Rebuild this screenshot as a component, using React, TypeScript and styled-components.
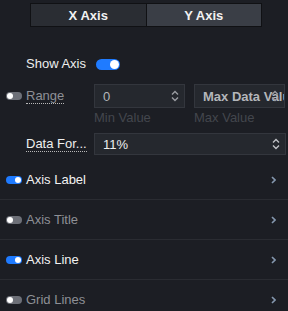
import React from 'react';
import styled, { createGlobalStyle } from 'styled-components';

const GlobalStyle = createGlobalStyle`
  body {
    margin: 0;
    background: #1c1e24;
    font-family: "Liberation Sans", Arial, sans-serif;
    font-size: 13px;
    color: #e8e8e8;
  }
`;

const Panel = styled.div`
  width: 288px;
  height: 311px;
  overflow: hidden;
  background: #1c1e24;
`;

const Tabs = styled.div`
  display: flex;
  margin: 3px 0 0 30px;
  width: 232px;
  height: 24px;
  border: 1px solid #101114;
  box-sizing: border-box;
`;

const Tab = styled.div<{ active?: boolean }>`
  flex: 1;
  display: flex;
  align-items: center;
  justify-content: center;
  font-weight: bold;
  font-size: 13px;
  color: #f2f2f2;
  background: ${(p) => (p.active ? '#3a3e46' : '#2a2d33')};
  & + & {
    border-left: 1px solid #101114;
  }
`;

const FieldRow = styled.div<{ mt: number; center?: boolean }>`
  display: flex;
  align-items: ${(p) => (p.center ? 'center' : 'flex-start')};
  margin-top: ${(p) => p.mt}px;
`;

const Lead = styled.div<{ pt?: number }>`
  width: 20px;
  display: flex;
  justify-content: flex-start;
  padding-left: 6px;
  padding-top: ${(p) => p.pt ?? 0}px;
  box-sizing: border-box;
  flex-shrink: 0;
`;

const Label = styled.span<{ dim?: boolean; dotted?: boolean; pt?: number; auto?: boolean }>`
  width: ${(p) => (p.auto ? 'auto' : '68px')};
  margin-right: ${(p) => (p.auto ? 10 : 0)}px;
  padding-top: ${(p) => p.pt ?? 0}px;
  flex-shrink: 0;
  margin-left: 6px;
  color: ${(p) => (p.dim ? '#8e9096' : '#eeeeee')};
  line-height: 16px;
  white-space: nowrap;
  span {
    border-bottom: ${(p) => (p.dotted ? '1px dotted #b8b8b8' : 'none')};
  }
`;

const Switch = styled.div<{ on?: boolean; small?: boolean }>`
  position: relative;
  width: ${(p) => (p.small ? 16 : 24)}px;
  height: ${(p) => (p.small ? 8 : 11)}px;
  border-radius: 6px;
  background: ${(p) => (p.on ? '#1f7bff' : '#6d7078')};
  flex-shrink: 0;
  &::after {
    content: '';
    position: absolute;
    top: 1px;
    left: ${(p) => (p.on ? (p.small ? 9 : 14) : 1)}px;
    width: ${(p) => (p.small ? 6 : 9)}px;
    height: ${(p) => (p.small ? 6 : 9)}px;
    border-radius: 50%;
    background: #ffffff;
  }
`;

const InputGroup = styled.div`
  display: flex;
  gap: 9px;
`;

const InputCol = styled.div`
  display: flex;
  flex-direction: column;
  width: 91px;
`;

const Input = styled.div<{ w?: number; h?: number; bold?: boolean; bright?: boolean }>`
  position: relative;
  width: ${(p) => p.w ?? 91}px;
  height: ${(p) => p.h ?? 24}px;
  box-sizing: border-box;
  border: 1px solid #33363d;
  background: #25282e;
  display: flex;
  align-items: center;
  padding-left: 8px;
  overflow: hidden;
  white-space: nowrap;
  color: ${(p) => (p.bright ? '#eeeeee' : '#b4b6ba')};
  font-weight: ${(p) => (p.bold ? 'bold' : 'normal')};
`;

const Spinner = styled.svg`
  position: absolute;
  right: 5px;
  top: 50%;
  transform: translateY(-50%);
`;

const Hint = styled.div`
  margin-top: 2px;
  color: #43464d;
  line-height: 16px;
`;

const Section = styled.div`
  display: flex;
  align-items: center;
  height: 39px;
  border-bottom: 1px solid #2a2c32;
  padding: 0 12px 0 6px;
`;

const SectionTitle = styled.span<{ dim?: boolean }>`
  flex: 1;
  margin-left: 4px;
  color: ${(p) => (p.dim ? '#8e9096' : '#f2f2f2')};
`;

const Sections = styled.div`
  margin-top: 5px;
`;

const Arrows = ({ color = '#9a9ca2' }: { color?: string }) => (
  <Spinner width="8" height="12" viewBox="0 0 8 12">
    <path d="M1 4.5 L4 1.5 L7 4.5" fill="none" stroke={color} strokeWidth="1.4" />
    <path d="M1 7.5 L4 10.5 L7 7.5" fill="none" stroke={color} strokeWidth="1.4" />
  </Spinner>
);

const Chevron = () => (
  <svg width="5" height="8" viewBox="0 0 5 8">
    <path d="M1 1 L4 4 L1 7" fill="none" stroke="#8497ae" strokeWidth="1.6" />
  </svg>
);

const sections = [
  { title: 'Axis Label', on: true },
  { title: 'Axis Title', on: false },
  { title: 'Axis Line', on: true },
  { title: 'Grid Lines', on: false },
];

export default function App() {
  return (
    <Panel>
      <GlobalStyle />
      <Tabs>
        <Tab>X Axis</Tab>
        <Tab active>Y Axis</Tab>
      </Tabs>

      <FieldRow mt={29} center>
        <Lead />
        <Label auto>Show Axis</Label>
        <Switch on />
      </FieldRow>

      <FieldRow mt={12}>
        <Lead pt={8}>
          <Switch small />
        </Lead>
        <Label dim dotted pt={4}>
          <span>Range</span>
        </Label>
        <InputGroup>
          <InputCol>
            <Input>
              0
              <Arrows />
            </Input>
            <Hint>Min Value</Hint>
          </InputCol>
          <InputCol>
            <Input bold>
              Max Data Value
              <Arrows />
            </Input>
            <Hint>Max Value</Hint>
          </InputCol>
        </InputGroup>
      </FieldRow>

      <FieldRow mt={7}>
        <Lead />
        <Label dotted pt={3}>
          <span>Data For...</span>
        </Label>
        <Input w={192} h={22} bright>
          11%
          <Arrows color="#c0c2c6" />
        </Input>
      </FieldRow>

      <Sections>
        {sections.map((s) => (
          <Section key={s.title}>
            <Switch small on={s.on} />
            <SectionTitle dim={!s.on}>{s.title}</SectionTitle>
            <Chevron />
          </Section>
        ))}
      </Sections>
    </Panel>
  );
}
